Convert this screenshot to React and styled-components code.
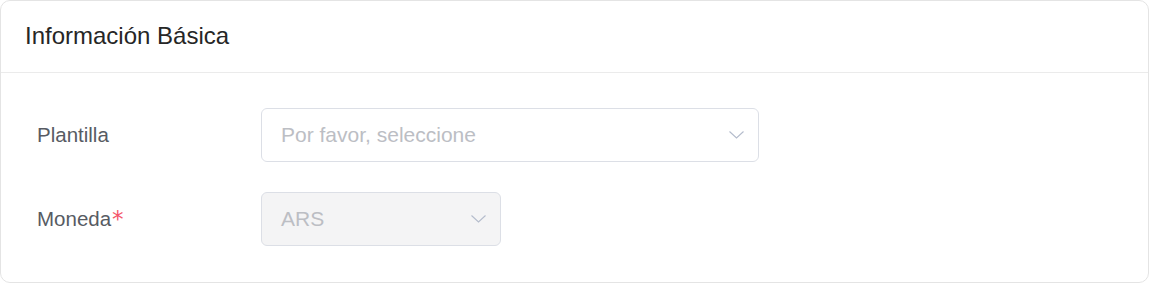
import React from 'react';
import styled, { createGlobalStyle } from 'styled-components';

const Global = createGlobalStyle`
  body {
    margin: 0;
    background: #ffffff;
    font-family: "Liberation Sans", Arial, sans-serif;
  }
`;

function Chevron() {
  return (
    <svg width="15" height="8" viewBox="0 0 15 8" fill="none">
      <polyline points="0.5,0.5 7.5,7 14.5,0.5" stroke="#b4bccc" strokeWidth="1.1" />
    </svg>
  );
}

export default function App() {
  return (
    <>
      <Global />
      <Card>
        <Header>
          <Title>Información Básica</Title>
        </Header>
        <Body>
          <Row>
            <Label>Plantilla</Label>
            <Select width="498px">
              <Value>Por favor, seleccione</Value>
              <Chevron />
            </Select>
          </Row>
          <Row>
            <Label>
              Moneda<Required>*</Required>
            </Label>
            <Select width="240px" disabled>
              <Value>ARS</Value>
              <Chevron />
            </Select>
          </Row>
        </Body>
      </Card>
    </>
  );
}

const Card = styled.div`
  width: 1149px;
  height: 283px;
  box-sizing: border-box;
  border: 1px solid #e4e4e4;
  border-radius: 10px;
  background: #fff;
  overflow: hidden;
`;
const Header = styled.div`
  height: 72px;
  box-sizing: border-box;
  border-bottom: 1px solid #ebebeb;
  padding: 0 24px 2px;
  display: flex;
  align-items: center;
`;
const Title = styled.h2`
  margin: 0;
  font-size: 24px;
  font-weight: 400;
  color: #262626;
`;
const Body = styled.div`
  padding: 35px 36px 0;
  display: flex;
  flex-direction: column;
  gap: 30px;
`;
const Row = styled.div`
  display: flex;
  align-items: center;
`;
const Label = styled.div`
  width: 224px;
  font-size: 20.5px;
  color: #575b63;
`;
const Required = styled.span`
  font-family: "DejaVu Sans", sans-serif;
  font-size: 23px;
  line-height: 0;
  color: #f4566b;
  position: relative;
  top: 1px;
  margin-left: 1px;
`;
const Select = styled.div`
  width: ${p => p.width};
  height: 54px;
  box-sizing: border-box;
  border: 1px solid #dcdfe6;
  border-radius: 6px;
  background: ${p => (p.disabled ? '#f4f4f5' : '#fff')};
  padding: 0 14px 0 19px;
  display: flex;
  align-items: center;
  justify-content: space-between;
`;
const Value = styled.span`
  font-size: 21px;
  color: #bcbec4;
`;
